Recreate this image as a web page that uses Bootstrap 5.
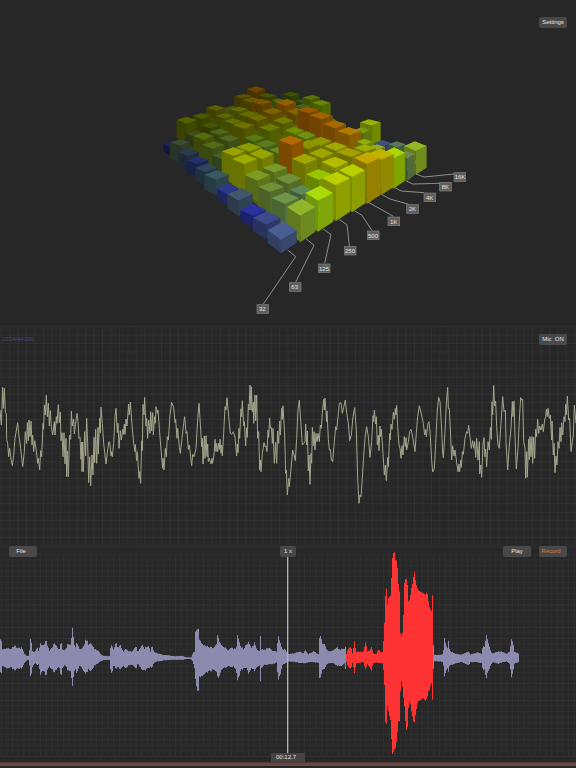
<!DOCTYPE html>
<html lang="en">
<head>
<meta charset="utf-8">
<meta name="viewport" content="width=device-width, initial-scale=1">
<title>Audio analyser</title>
<link rel="stylesheet" href="https://cdn.jsdelivr.net/npm/bootstrap@5.3.0/dist/css/bootstrap.min.css">
<style>
body{background:#272727;color:#e4e4e4;font-family:"Liberation Sans",Arial,sans-serif;font-size:6px;line-height:11px}
.stack>*{grid-area:1/1;min-width:0}
.stack svg{display:block;width:100%;height:auto}
.tools{z-index:1;padding:0 9px}
.tools-top{padding-top:17px}
.tools-mid{padding-top:8px}
.tool-grid{display:grid;grid-template-columns:1fr auto 1fr}
.tool{width:28px;padding:0;border:0;border-radius:2px;background:#484848;color:#e4e4e4;font-size:6px;line-height:11px}
.tool:hover{background:#585858;color:#fff}
.tool-zoom{width:16px}
.tool-rec{color:#d87c3c}
.rate{color:#4c4c7c;margin-left:-7px}
.clock{z-index:1;width:34px;line-height:9px;margin-bottom:6px;background:#444;text-align:center;padding-right:4px}
.grid-line{stroke:#303030;stroke-width:3;fill:none}
.lead-line{stroke:#8e8e8e;stroke-width:3;fill:none}
.tag-box{fill:#5e5e5e;stroke:#808080;stroke-width:2}
.tag-text{fill:#e2e2e2;font-size:18px}
</style>
<script src="https://cdn.jsdelivr.net/npm/bootstrap@5.3.0/dist/js/bootstrap.bundle.min.js"></script>
</head>
<body>
<main>
<section class="stack d-grid" aria-label="Spectrum">
  <svg id="spectrum" viewBox="-465 -240 1728 978" role="img" aria-label="Frequency spectrum">
    <defs><linearGradient id="floor"><stop offset="0" stop-color="#35420c"/><stop offset=".5" stop-color="#5c6808"/><stop offset="1" stop-color="#7e8c08"/></linearGradient></defs>
    <polygon points="45,190 110,195 390,430 378,500 250,395 45,225" fill="#222a46"/>
    <polygon points="75,195 70,140 160,95 242,75 290,45 360,65 470,75 495,85 600,165 680,195 790,245 640,350 430,470 390,440" fill="url(#floor)"/>
  </svg>
  <div class="tools tools-top d-flex justify-content-end align-items-start"><button type="button" class="btn tool">Settings</button></div>
</section>
<section class="stack d-grid" aria-label="Live input">
  <svg id="scope" viewBox="0 18 1728 660" role="img" aria-label="Live waveform"></svg>
  <div class="tools tools-mid d-flex justify-content-between align-items-start"><span class="rate">1024/44100</span><button type="button" class="btn tool">Mic&nbsp; ON</button></div>
</section>
<section class="stack d-grid" aria-label="Recording">
  <svg id="track" viewBox="0 18 1728 666" role="img" aria-label="Recorded waveform"></svg>
  <div class="tools tool-grid align-items-start">
    <div class="d-flex"><button type="button" class="btn tool pe-1">File</button></div>
    <button type="button" class="btn tool tool-zoom">1 x</button>
    <div class="d-flex justify-content-end gap-2"><button type="button" class="btn tool">Play</button><button type="button" class="btn tool tool-rec pe-1">Record</button></div>
  </div>
  <output class="clock align-self-end mx-auto">00:12.7</output>
</section>
</main>
<script>
const NS='http://www.w3.org/2000/svg';
function add(parent,name,attrs,text){
  const e=document.createElementNS(NS,name);
  for(const k in attrs)e.setAttribute(k,attrs[k]);
  if(text)e.textContent=text;
  parent.appendChild(e);
  return e;
}
function shade(hex,k){
  return 'rgb('+[1,3,5].map(i=>Math.round(parseInt(hex.substr(i,2),16)*k)).join(',')+')';
}
function gridLines(svg,step,x0,y0,y1,vy0){
  let d='';
  for(let x=x0;x<1728;x+=step)d+=`M${x} ${vy0}V${y1}`;
  for(let y=y0;y<=y1+1;y+=step)d+=`M0 ${y}H1728`;
  add(svg,'path',{d,class:'grid-line'});
}

/* Spectrum blocks, far to near: left x, front x, right x, back y, front y, height, colour */
const blocks=[
[276,303,330,18,38,28,'#6b4400'],[238,262,292,42,55,36,'#5c5200'],[310,340,365,40,53,24,'#4a5200'],
[384,410,433,35,50,24,'#3c5200'],[420,443,470,56,70,22,'#3c5418'],[443,466,495,45,60,24,'#5a7500'],[415,443,472,72,86,24,'#48601a'],[472,500,527,60,77,36,'#6a8800'],
[350,370,390,55,68,20,'#4f6a10'],[262,290,320,52,68,28,'#665a00'],[292,321,350,57,75,28,'#7d5400'],[363,390,423,57,78,30,'#955e00'],
[154,183,210,75,92,26,'#5c5f00'],[222,250,280,80,95,24,'#626a00'],[322,350,383,85,103,26,'#7e6400'],[395,422,452,83,105,30,'#806400'],
[250,280,312,93,112,24,'#666a00'],[182,208,238,100,115,26,'#5d6800'],[280,308,340,104,123,30,'#716c00'],
[112,140,168,100,116,40,'#515a00'],[65,95,125,110,131,58,'#545f00'],[207,235,262,115,133,30,'#606e00'],
[135,165,195,128,145,28,'#465608'],[232,268,299,126,146,48,'#6e7000'],[355,385,415,111,132,36,'#747a00'],
[312,343,377,132,153,38,'#6a7c00'],[163,193,224,146,165,28,'#4f6618'],[92,118,148,153,170,34,'#3c5020'],
[428,463,493,80,100,62,'#9a5b00'],[463,500,533,96,118,60,'#a36200'],[505,541,573,121,145,52,'#a76a00'],
[615,650,677,118,137,66,'#93b400'],[600,625,643,142,160,38,'#7c9a10'],[547,584,618,141,166,54,'#b37a00'],
[390,420,447,140,163,32,'#6e9000'],[425,453,482,153,178,32,'#6f9010'],
[192,222,254,165,185,34,'#4f691d'],[115,146,177,157,180,44,'#586a0c'],[268,297,330,163,185,38,'#587a12'],
[463,495,530,170,197,32,'#8e9a00'],[300,330,366,180,203,34,'#5c7b20'],[605,630,652,176,195,34,'#8fae10'],
[658,682,708,180,200,30,'#3f5080'],[425,460,495,180,207,40,'#8f9300'],[142,173,208,184,206,48,'#546b1a'],
[507,543,577,186,213,36,'#a2a800'],[640,665,690,193,210,36,'#93ad20'],[700,727,752,184,203,50,'#58785a'],
[597,630,662,193,215,38,'#9cad00'],[545,590,622,203,232,40,'#a39f00'],[342,370,400,200,220,46,'#6a8a1c'],
[463,500,535,205,235,44,'#9fa600'],[172,202,232,216,238,42,'#45602a'],
[243,283,320,188,215,60,'#8b9b00'],[200,235,270,202,228,84,'#98a400'],[285,322,356,206,238,60,'#98a500'],
[371,410,445,167,195,96,'#b56a00'],[232,268,307,222,253,84,'#9bab00'],
[411,450,487,221,253,76,'#a0a800'],[500,540,580,230,264,60,'#b4bc00'],
[323,358,397,250,278,58,'#789a28'],[270,308,345,270,302,64,'#7d9a22'],
[453,492,530,267,300,60,'#98c400'],[363,400,440,280,312,52,'#6f9038'],[310,345,388,306,336,68,'#6f8f38'],
[405,440,475,316,345,56,'#5f8858'],[350,390,432,337,372,66,'#6f944a'],
[25,45,62,183,203,24,'#1b215c'],[45,73,104,178,197,50,'#3a4c38'],[70,98,132,205,228,42,'#2a3c52'],
[95,124,160,230,252,38,'#24306a'],[121,150,188,250,277,40,'#30455a'],[148,183,221,270,300,46,'#3a5860'],
[185,215,252,310,342,32,'#2d378c'],[217,250,293,324,362,46,'#41576c'],[256,295,332,371,408,34,'#2a32a0'],[294,334,376,394,434,44,'#3c4a8c'],
[747,782,815,184,214,70,'#94b828'],[732,757,778,213,235,68,'#6a8a50'],[683,715,750,202,236,90,'#a8d800'],
[637,677,716,206,240,106,'#c0b400'],[597,635,676,216,252,120,'#c4a800'],[553,591,630,252,291,106,'#b8d000'],
[502,542,585,276,316,108,'#bcd000'],[451,489,534,317,362,93,'#a8dc0c'],[396,436,481,356,407,80,'#90b42c'],
[338,378,425,424,480,40,'#4a5f90']];
const spectrum=document.getElementById('spectrum');
for(const [l,f,r,b,fy,h,c] of blocks){
  const my=Math.round((b+fy)/2)-1,hs=Math.round(h*.93);
  add(spectrum,'polygon',{points:`${l},${my} ${f},${fy} ${f},${fy+h} ${l},${my+hs}`,fill:shade(c,.68)});
  add(spectrum,'polygon',{points:`${r},${my} ${f},${fy} ${f},${fy+h} ${r},${my+hs}`,fill:shade(c,.76)});
  add(spectrum,'polygon',{points:`${l},${my} ${l+r-f},${b} ${r},${my} ${f},${fy}`,fill:c});
}
/* Band tags: caption, box x, box y, leader line */
const tags=[
['32',306,674,'398,510 422,530 325,672'],['63',403,608,'453,476 477,496 422,606'],
['125',490,552,'505,447 528,464 509,550'],['250',568,499,'553,419 576,434 583,498'],
['500',637,453,'598,392 621,406 651,452'],['1K',699,411,'639,366 715,409'],
['2K',755,374,'680,343 705,357 761,373'],['4K',807,339,'717,322 739,333 807,338'],
['8K',854,307,'752,302 773,312 855,310'],['16K',897,278,'783,282 807,291 897,282']];
for(const [t,x,y,p] of tags){
  add(spectrum,'polyline',{points:p,class:'lead-line'});
  add(spectrum,'rect',{x,y,width:35,height:26,class:'tag-box'});
  add(spectrum,'text',{x:x+(t.length<3?6:2),y:y+20,class:'tag-text'},t);
}

/* Live waveform, three overlapping windows of samples */
const scopeParts=[[0,'0,270 4,315 8,202 10,265 13,205 16,278 19,280 20,358 23,370 26,410 29,385 33,418 37,437 41,405 45,355 53,308 57,350 62,385 68,440 73,395 76,335 80,370 82,308 85,362 87,300 90,350 93,303 96,375 98,345 101,395 104,362 108,385 113,430 115,415 119,450 122,392 125,410 129,310 131,328 133,255 136,285 139,226 142,290 145,250 148,318 151,272 154,322 158,345 163,305 165,345 169,290 171,310 175,254 178,308 181,276 183,362 186,338 189,410 192,338 195,432 198,355 200,470 202,393 205,470 209,345 212,358 214,273 217,318 221,297 223,342 228,300 231,280 234,305 237,355 240,352 243,418 245,366 246,455 248,366 250,455 254,335 257,408 260,295 263,370 266,488 269,410 272,498 276,405 279,465 282,352 284,428 287,328 290,430 294,322 295,402 299,295 301,338 303,262 307,310 311,370 318,432 323,390 326,366 329,366 333,408 334,395 337,410 341,370 345,290 348,265 352,338 354,310 357,385 361,332 364,360 368,328 370,343 373,312 375,343 378,297 381,318 386,252 388,285 391,246 396,315 401,370 405,395 406,373 410,422 412,395 417,475 419,455 422,490 425,362 427,392 429,253 432,285 434,232 438,318 440,295 443,355 446,300 450,340 452,275 455,333 458,278 460,345 464,290 466,310 468,260 472,280 474,270 478,325 483,390 488,445 489,415 492,450 496,385 499,410 502,350 505,360 510,285 515,247 521,262 525,308 527,298 531,355 533,325 538,382 541,400 546,355 551,310 554,290 558,340 561,335 565,388 568,375 573,420'],
[570,'5,437 8,403 12,410 18,385 23,300 27,250 30,295 35,380 37,355 39,432 43,348 45,415 48,347 51,410 53,372 55,425 58,415 63,432 66,415 68,430 73,395 75,358 78,395 80,370 83,395 86,370 88,388 90,358 93,400 95,375 97,408 101,340 105,260 108,270 111,233 116,290 121,340 125,343 130,335 135,352 140,408 142,372 144,398 147,325 149,355 153,266 155,290 157,242 161,318 163,305 167,378 170,323 172,352 175,253 177,270 180,195 183,270 184,200 187,275 190,247 191,310 195,225 197,303 200,225 203,355 206,335 209,450 211,420 213,455 217,400 222,368 225,380 228,378 231,395 234,330 236,352 239,295 241,325 244,322 247,370 249,325 253,430 257,367 260,430 263,333 266,370 269,303 271,345 275,265 277,298 279,257 284,345 287,460 289,450 292,525 296,475 298,500 304,435 308,390 312,405 316,422 320,355 324,270 328,240 332,300 337,375 341,370 345,365 347,312 350,375 352,333 355,453 357,405 360,493 363,400 365,430 367,322 370,378 372,335 375,390 378,340 381,365 384,340 388,365 391,315 394,325 397,280 401,238 403,270 405,234 410,305 411,273 415,358 418,390 421,388 424,420 428,425 433,365 437,320 440,330 444,290 448,250 453,248 457,280 461,262 466,240 470,278 475,310 479,362 484,345 489,290 494,263 499,330 503,475 507,550 510,525 513,530 517,475 521,408 526,345 530,320 535,350 540,412 545,365 549,287 551,305 553,270 557,312 559,290 562,375 565,345 567,392'],
[1140,'0,318 2,350 4,328 9,400 13,465 16,435 19,482 23,412 25,440 29,340 31,360 33,312 36,328 40,277 43,298 46,265 48,285 50,256 53,320 57,375 60,385 63,415 66,377 69,405 73,350 76,380 78,353 80,390 85,365 89,335 93,328 98,350 105,395 109,338 113,290 118,257 124,282 130,310 134,345 137,328 139,350 144,310 147,305 151,350 155,420 158,456 163,445 167,370 172,270 176,232 180,245 184,310 188,400 190,413 195,335 199,250 203,202 205,265 208,265 212,350 215,420 218,377 222,408 225,390 230,428 234,455 237,432 239,455 242,420 244,442 247,395 250,403 255,355 260,335 263,340 266,316 270,352 274,385 278,362 281,385 284,365 287,412 290,355 294,420 298,365 299,462 302,435 305,472 309,372 312,353 315,410 317,387 320,440 324,365 328,390 331,322 334,358 336,245 338,285 341,196 344,258 347,243 350,320 354,375 358,385 363,310 368,230 372,275 376,270 378,365 383,450 388,375 393,325 397,245 399,290 402,243 405,350 409,447 414,385 418,300 422,233 425,240 428,238 431,365 435,385 437,475 440,395 442,472 446,357 448,420 450,350 453,410 456,350 458,430 461,352 464,415 467,328 470,350 473,298 476,340 479,318 483,330 487,312 490,335 494,300 497,290 499,268 502,290 504,265 508,295 511,285 515,360 516,303 520,405 522,370 525,458 528,408 531,435 534,365 537,385 540,322 543,365 545,308 548,345 552,290 555,305 557,253 559,285 562,228 566,300 569,295 573,395 577,365 580,345 583,255 588,310']];
const scope=document.getElementById('scope');
gridLines(scope,25.3,4,20,678,20);
add(scope,'polyline',{fill:'none',stroke:'#a3a58c','stroke-width':3,'stroke-linejoin':'bevel',
  points:scopeParts.map(([o,s])=>s.split(' ').map(p=>{const [x,y]=p.split(',');return (+x+o)+','+y;}).join(' ')).join(' ')});

/* Recorded waveform envelope: x, height above centre, depth below centre */
const envParts=[[0,'0,58,45 3,50,44 5,24,22 20,28,30 30,24,25 42,36,36 50,30,32 65,28,28 72,12,14 80,6,6 86,6,6 89,54,50 92,50,50 96,20,25 104,16,14 110,32,20 114,20,18 120,44,50 128,35,35 137,50,50 143,30,28 148,20,25 160,40,40 167,38,35 176,22,25 182,46,52 187,22,26 194,22,20 203,42,38 210,40,40 214,60,60 217,92,82 220,45,40 224,28,30 229,45,44 238,24,20 250,35,40 257,55,44 265,38,32 271,44,40 282,26,22 295,20,14 304,8,8 316,5,5 327,6,6 331,36,38 335,34,42 340,25,20 347,48,34 352,28,24 360,38,34 368,18,22 376,26,28 384,18,20 395,20,20 407,34,30 412,16,15 425,40,36 432,28,36 438,32,32 444,36,30 450,18,24 454,38,30 460,18,14 470,14,10 485,10,8 500,8,6 520,5,5 543,6,5 560,2,3 572,2,3 578,15,12 583,20,35'],
[570,'15,78,62 20,85,100 24,80,90 27,50,50 32,48,58 38,36,48 48,34,40 58,32,38 70,28,32 78,40,40 81,62,50 86,50,55 92,36,34 100,34,30 112,22,24 122,30,26 130,26,24 138,30,40 142,74,68 146,44,50 152,32,34 160,25,30 167,38,26 175,46,46 183,28,28 192,42,36 200,24,26 207,22,24 210,60,64 213,24,28 222,24,20 238,30,18 246,20,18 258,18,12 262,50,50 265,62,62 270,44,48 275,24,20 284,26,16 290,14,12 300,12,10 330,18,14 338,12,14 346,24,16 352,10,12 370,20,12 384,10,14 387,60,60 390,66,58 395,44,36 402,38,30 408,24,18 418,18,14 430,22,14 440,30,22 450,24,24 462,28,16 466,36,38 468,12,12 475,30,28 482,30,30 486,14,14 492,46,42 497,18,16 508,18,14 520,18,12 526,54,38 530,18,14 538,22,28 542,34,40 548,14,16 556,10,12 565,26,16 572,14,14 578,20,16'],
[1128,'22,80,55 26,110,90 28,262,255 32,155,140 36,180,160 44,190,195 46,290,290 50,310,285 53,325,275 57,295,270 62,290,240 65,230,190 69,200,190 72,70,100 76,60,60 80,90,110 84,225,145 88,240,205 92,235,225 96,170,150 100,175,125 105,210,160 110,230,185 113,268,200 118,225,165 124,205,130 130,200,128 140,195,120 147,190,128 152,200,120 158,155,90 165,140,75 168,188,125 170,185,120 171,36,30 174,10,10 190,9,10 200,12,12 204,60,55 208,40,40 213,28,30 216,48,38 220,20,20 232,14,18 250,10,12 262,12,14 275,20,22 282,10,12 302,16,12 315,12,14 320,35,34 325,28,30 329,70,64 333,58,46 338,38,36 343,16,18 352,14,12 366,18,16 378,18,12 390,12,10 400,18,16 405,54,56 410,44,40 414,18,16 424,14,12 428,10,10']];
const env=envParts.flatMap(([o,s])=>s.split(' ').map(p=>{const [x,u,d]=p.split(',').map(Number);return [x+o,u,d];}));
const track=document.getElementById('track');
gridLines(track,16.85,4,43,650,43);
add(track,'path',{d:'M0 23H1728',class:'grid-line'});
const paths={'#8c8aae':'','#ff3333':''};
let k=0;
for(let x=0;x<=1554;x+=3){
  while(k<env.length-2&&env[k+1][0]<=x)k++;
  const a=env[k],b=env[k+1],t=Math.min(1,(x-a[0])/(b[0]-a[0]));
  const n=.96+.16*Math.abs(Math.sin(x*12.9898)*43758.5%1);
  const u=(a[1]+(b[1]-a[1])*t)*(a[1]>99?1:n),d=(a[2]+(b[2]-a[2])*t)*(a[2]>99?1:n);
  paths[x>=1038&&x<1299?'#ff3333':'#8c8aae']+=`M${x} ${Math.round(354-u)}h3V${Math.round(354+d)}h-3z`;
}
for(const c in paths)add(track,'path',{d:paths[c],fill:c});
add(track,'rect',{x:861,y:46,width:4,height:600,fill:'#b4b4b4'});
add(track,'rect',{x:0,y:667,width:1728,height:11,fill:'#69463f'});
</script>
</body>
</html>
